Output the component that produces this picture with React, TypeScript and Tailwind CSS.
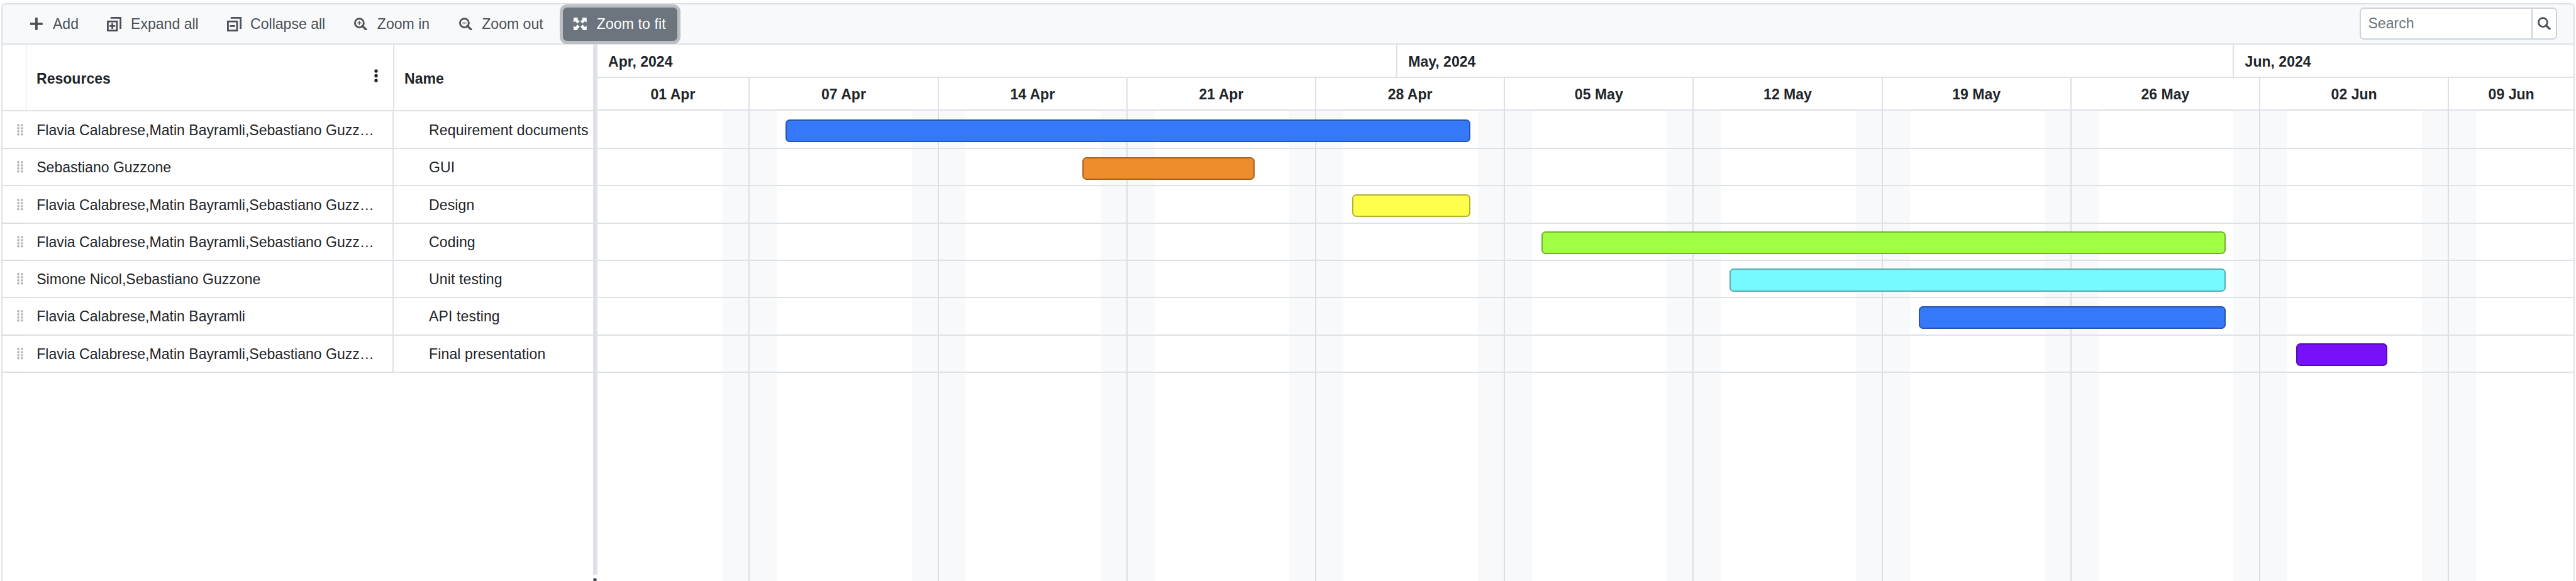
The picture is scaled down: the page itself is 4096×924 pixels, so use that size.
import React from "react";

const COLUMNS = ["07 Apr", "14 Apr", "21 Apr", "28 Apr", "05 May", "12 May", "19 May", "26 May", "02 Jun"];

type Task = {
  resources: string;
  name: string;
  start: number;
  length: number;
  color: string;
};

// start and length are measured in pixels along the time axis
const TASKS: Task[] = [
  { resources: "Flavia Calabrese,Matin Bayramli,Sebastiano Guzz…", name: "Requirement documents", start: 299.5, length: 1089, color: "bg-[#3578fa] border-[#2554af]" },
  { resources: "Sebastiano Guzzone", name: "GUI", start: 771.5, length: 273.5, color: "bg-[#ef8c2e] border-[#a7621f]" },
  { resources: "Flavia Calabrese,Matin Bayramli,Sebastiano Guzz…", name: "Design", start: 1200.5, length: 188, color: "bg-[#feff4a] border-[#b1b233]" },
  { resources: "Flavia Calabrese,Matin Bayramli,Sebastiano Guzz…", name: "Coding", start: 1501.2, length: 1088, color: "bg-[#a0ff41] border-[#70b22d]" },
  { resources: "Simone Nicol,Sebastiano Guzzone", name: "Unit testing", start: 1800.9, length: 788.3, color: "bg-[#76f9ff] border-[#53aeb2]" },
  { resources: "Flavia Calabrese,Matin Bayramli", name: "API testing", start: 2101.5, length: 487.7, color: "bg-[#3578fa] border-[#2554af]" },
  { resources: "Flavia Calabrese,Matin Bayramli,Sebastiano Guzz…", name: "Final presentation", start: 2701.8, length: 145, color: "bg-[#7810fa] border-[#540baf]" },
];

const PlusIcon = () => (
  <svg className="w-[19.8px] h-[19.8px] shrink-0" viewBox="0 0 24 24" stroke="currentColor" strokeWidth="4.6">
    <path d="M12 0V24M0 12H24" />
  </svg>
);

const StackIcon = ({ plus }: { plus?: boolean }) => (
  <svg className="w-[23px] h-[23px] shrink-0" viewBox="0 0 28 28" fill="none" stroke="currentColor" strokeWidth="3.4">
    <rect x="1.7" y="8.7" width="17.6" height="17.6" />
    <path d="M7 1.7H26.3V23" />
    <path d={plus ? "M5 17.5H16M10.5 12V23" : "M5.4 17.5H15.6"} />
  </svg>
);

const GlassIcon = ({ sign }: { sign?: "plus" | "minus" }) => (
  <svg className="w-[20.6px] h-[20.6px] shrink-0" viewBox="0 0 25 25" fill="none" stroke="currentColor">
    <circle cx="10.2" cy="10.4" r="8.5" strokeWidth="3.4" />
    <path d="M16 16.2L23.2 23" strokeWidth="4" strokeLinecap="round" />
    {sign && <path d={sign === "plus" ? "M6.3 10.4H14.1M10.2 6.5V14.3" : "M6.3 10.4H14.1"} strokeWidth="1.7" />}
  </svg>
);

const ARROW = "M1.2 0H9L6.8 2.8L11.4 7.2L7.6 11L3 6.6L0 9V1.2Z";
const FitIcon = () => (
  <svg className="w-[20.6px] h-[20.6px] shrink-0" viewBox="0 0 25 25" fill="currentColor" stroke="currentColor" strokeWidth="0.6" strokeLinejoin="round">
    <path d={ARROW} />
    <path d={ARROW} transform="matrix(-1 0 0 1 25 0)" />
    <path d={ARROW} transform="matrix(1 0 0 -1 0 25)" />
    <path d={ARROW} transform="matrix(-1 0 0 -1 25 25)" />
  </svg>
);

const Grip = () => (
  <svg className="w-[10px] h-[19px]" viewBox="0 0 10 19" fill="#b4b7bb">
    {[2, 6.9, 11.8, 16.7].map((y) => (
      <g key={y}>
        <circle cx="2.1" cy={y} r="1.9" />
        <circle cx="7.9" cy={y} r="1.9" />
      </g>
    ))}
  </svg>
);

function Toolbar() {
  return (
    <div className="flex h-[64px] shrink-0 items-start border-b-2 border-[#dee2e6] bg-[#f8f9fa] pl-[44.2px] pr-[26px] text-[#495057] rounded-t-[5px]">
      <div className="flex h-[62px] items-center">
        <button className="flex w-[122.3px] items-center gap-[16px]"><PlusIcon />Add</button>
        <button className="flex w-[190.2px] items-center gap-[14.6px]"><StackIcon plus />Expand all</button>
        <button className="flex w-[202.3px] items-center gap-[14.4px]"><StackIcon />Collapse all</button>
        <button className="flex w-[167.1px] items-center gap-[16.3px]"><GlassIcon sign="plus" />Zoom in</button>
        <button className="flex w-[165px] items-center gap-[15.6px]"><GlassIcon sign="minus" />Zoom out</button>
        <button className="flex h-[53px] w-[182px] items-center gap-[15.8px] rounded-[6.5px] bg-[#6c757d] pl-[17.3px] tracking-[0.1px] text-white shadow-[0_0_0_5px_#bbbfc4]"><FitIcon />Zoom to fit</button>
      </div>
      <div className="ml-auto mt-[4.5px] flex h-[51px] w-[314.5px] overflow-hidden rounded-[6.5px] border-2 border-[#ced4da] bg-white">
        <div className="flex flex-1 items-center pl-[12px] text-[#6c757d]">Search</div>
        <div className="flex w-[39.5px] items-center justify-center border-l-2 border-[#ced4da]"><GlassIcon /></div>
      </div>
    </div>
  );
}

function TaskTable() {
  return (
    <div className="flex w-[939px] shrink-0 flex-col">
      <div className="flex h-[106px] shrink-0 border-b-2 border-[#dee2e6] pt-[1px] font-bold">
        <div className="w-[38px] border-r border-[#dee2e6]" />
        <div className="flex w-[585px] items-center justify-between border-r-2 border-[#dee2e6] pt-[2px] pl-[16px] pr-[24px]">
          Resources
          <svg className="mb-[9px] h-[21px] w-[6px]" viewBox="0 0 6 21" fill="currentColor">
            <circle cx="3" cy="3" r="2.7" />
            <circle cx="3" cy="10.5" r="2.7" />
            <circle cx="3" cy="18" r="2.7" />
          </svg>
        </div>
        <div className="flex items-center pt-[2px] pl-[16px]">Name</div>
      </div>
      {TASKS.map((t, i) => (
        <div key={i} className="flex h-[59.29px] shrink-0 nth-2:h-[60.16px]">
          <div className="flex w-[38px] items-center border-b-2 border-[#dddddd] pl-[23px]"><Grip /></div>
          <div className="flex w-[584px] items-center overflow-hidden border-r-2 border-b-2 border-[#dee2e6] pt-[1px] pl-[16.2px] whitespace-nowrap">{t.resources}</div>
          <div className="flex flex-1 items-center border-b-2 border-[#dee2e6] pt-[1px] pl-[56px] tracking-[0.12px] whitespace-nowrap">{t.name}</div>
        </div>
      ))}
    </div>
  );
}

function Splitter() {
  return (
    <div className="flex w-[6.5px] shrink-0 flex-col items-center">
      <div className="h-[843px] w-full shrink-0 bg-[#dee2e6]" />
      <svg className="mt-[4.5px] h-[6px] w-[6px] shrink-0" viewBox="0 0 6 6"><circle cx="3" cy="3" r="2.8" fill="#495057" /></svg>
    </div>
  );
}

function Timeline() {
  return (
    <div className="flex min-w-0 flex-1 flex-col">
      <div className="flex h-[53px] shrink-0 border-b-2 border-[#dee2e6] font-bold">
        <div className="flex w-[1272.2px] items-center border-r-2 border-[#dee2e6] pt-[2px] pl-[17.5px]">Apr, 2024</div>
        <div className="flex w-[1329.9px] items-center border-r-2 border-[#dee2e6] pt-[2px] pl-[17.5px]">May, 2024</div>
        <div className="flex items-center pt-[2px] pl-[18px]">Jun, 2024</div>
      </div>
      <div className="flex h-[52px] shrink-0 border-b-2 border-[#dee2e6] font-bold">
        <div className="flex w-[242.9px] items-center justify-center border-r-2 border-[#dee2e6] pt-[2px]">01 Apr</div>
        {COLUMNS.map((c) => (
          <div key={c} className="flex w-[300.21px] items-center justify-center border-r-2 border-[#dee2e6] pt-[2px]">{c}</div>
        ))}
        <div className="flex flex-1 items-center justify-center pt-[2px]">09 Jun</div>
      </div>
      <div className="grid min-h-0 flex-1">
        <div className="col-start-1 row-start-1 flex">
          <div className="flex w-[242.9px] justify-end border-r-2 border-[#dddfe1]">
            <div className="w-[41px] bg-[#f8f9fa]" />
          </div>
          {COLUMNS.map((c) => (
            <div key={c} className="flex w-[300.21px] justify-between border-r-2 border-[#dddfe1]">
              <div className="w-[42.9px] bg-[#f8f9fa]" />
              <div className="w-[41px] bg-[#f8f9fa]" />
            </div>
          ))}
          <div className="flex flex-1"><div className="w-[42.9px] bg-[#f8f9fa]" /></div>
        </div>
        <div className="z-10 col-start-1 row-start-1 flex flex-col">
          {TASKS.map((t, i) => (
            <div key={i} className="flex h-[59.29px] items-end border-b-2 border-[#dee2e6] pb-[8.7px] first:h-[61.16px]">
              <div className={"h-[36.2px] rounded-[6.5px] border-2 " + t.color} style={{ marginLeft: t.start, width: t.length }} />
            </div>
          ))}
        </div>
      </div>
    </div>
  );
}

export default function App() {
  return (
    <div className="h-[924px] w-[4096px] overflow-hidden bg-white pt-[5px] pl-[2px] font-['Liberation_Sans',Arial,sans-serif] text-[23.06px] leading-[30px] text-[#212529]">
      <div className="flex h-[930px] w-[4092px] flex-col rounded-t-[7px] border-2 border-[#dee2e6]">
        <Toolbar />
        <div className="flex min-h-0 flex-1">
          <TaskTable />
          <Splitter />
          <Timeline />
        </div>
      </div>
    </div>
  );
}
